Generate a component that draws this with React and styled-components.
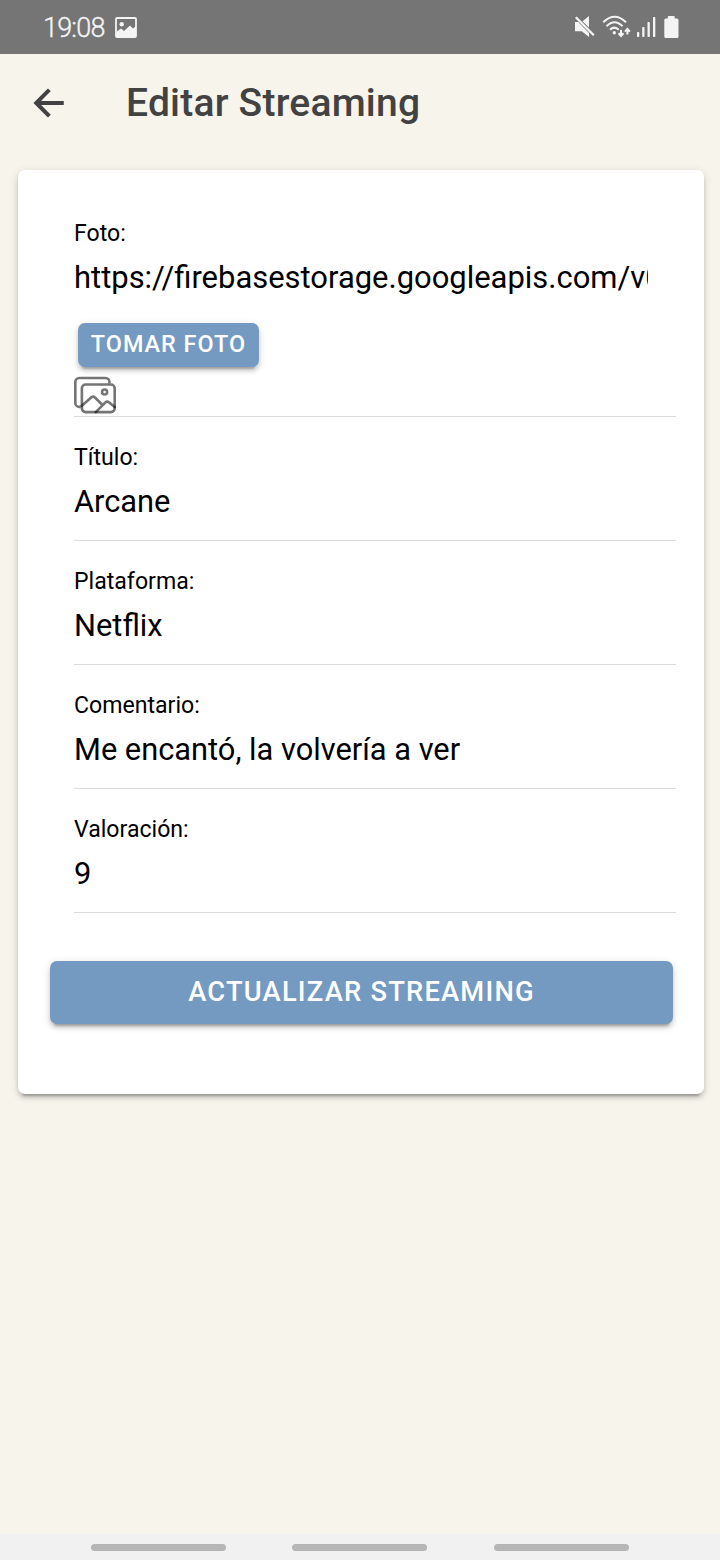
import React from "react";
import styled, { createGlobalStyle } from "styled-components";
import { IoImagesOutline } from "react-icons/io5";

const GlobalStyle = createGlobalStyle`
  * { box-sizing: border-box; }
  body { margin: 0; background: #f7f4ec; font-family: Roboto, sans-serif; }
`;

const Screen = styled.div`
  display: flex;
  flex-direction: column;
  width: 720px;
  height: 1560px;
  background: #f7f4ec;
  overflow: hidden;
`;

const StatusBar = styled.header`
  display: flex;
  align-items: center;
  justify-content: space-between;
  height: 54px;
  padding: 0 41px 0 43px;
  background: #757575;
  color: #f4f4f4;
`;

const StatusGroup = styled.div`
  display: flex;
  align-items: center;
  gap: ${(p) => p.$gap}px;
  svg { display: block; }
`;

const Clock = styled.span`
  width: 62px;
  font-size: 27px;
  line-height: 54px;
  font-weight: 300;
  letter-spacing: -0.8px;
  -webkit-text-stroke: 0.35px currentColor;
  padding-top: 1px;
`;

const Toolbar = styled.nav`
  display: flex;
  align-items: center;
  height: 98px;
  padding: 0 28px;
  color: #424242;
`;

const BackButton = styled.button`
  display: flex;
  width: 42px;
  height: 42px;
  margin: 0 56px 0 0;
  padding: 0;
  border: 0;
  background: none;
  color: inherit;
`;

const Title = styled.h1`
  margin: 0;
  font-size: 39px;
  line-height: 48px;
  font-weight: 500;
  letter-spacing: 0.22px;
  white-space: nowrap;
`;

const Card = styled.main`
  width: 686px;
  height: 924px;
  margin: 18px 16px 0 18px;
  padding: 30px 28px 0 32px;
  border-radius: 7px;
  background: #fff;
  box-shadow: 0 6px 2px -4px rgba(0, 0, 0, 0.2), 0 4px 4px 0 rgba(0, 0, 0, 0.14),
    0 2px 10px 0 rgba(0, 0, 0, 0.12);
`;

const Field = styled.section`
  display: flex;
  flex-direction: column;
  height: ${(p) => p.$height || 124}px;
  margin-left: 24px;
  padding-top: ${(p) => p.$top || 26}px;
  border-bottom: 1px solid #dcdcdc;
`;

const Label = styled.label`
  font-size: 23.1px;
  line-height: 30px;
  color: #000;
`;

const Value = styled.div`
  width: 574px;
  margin-top: 8px;
  overflow: hidden;
  font-size: ${(p) => p.$size || 30.8}px;
  line-height: 42px;
  color: #000;
  white-space: nowrap;
`;

const Button = styled.button`
  display: flex;
  justify-content: center;
  align-items: center;
  width: ${(p) => (p.$block ? 623 : 181)}px;
  height: ${(p) => (p.$block ? 63 : 44)}px;
  margin: ${(p) => (p.$block ? "48px 0 0" : "24px 0 0 4px")};
  padding: 0 0 ${(p) => (p.$block ? 1 : 2)}px;
  border: 0;
  border-radius: 7px;
  background: #749ac1;
  color: #fff;
  font-family: inherit;
  font-size: ${(p) => (p.$block ? 27.3 : 23.4)}px;
  font-weight: 500;
  letter-spacing: ${(p) => (p.$block ? 1.22 : 1)}px;
  text-transform: uppercase;
  white-space: nowrap;
  box-shadow: 0 6px 2px -4px rgba(0, 0, 0, 0.2), 0 4px 4px 0 rgba(0, 0, 0, 0.14),
    0 2px 10px 0 rgba(0, 0, 0, 0.12);
`;

const GalleryIcon = styled(IoImagesOutline)`
  display: block;
  width: 42px;
  height: 42px;
  margin-top: 7px;
  color: rgba(0, 0, 0, 0.54);
`;

const NavigationBar = styled.footer`
  display: flex;
  gap: 66.4px;
  height: 26px;
  margin-top: auto;
  padding: 10px 0 0 91px;
  background: #f1f1f1;
`;

const NavHandle = styled.span`
  width: 135px;
  height: 7px;
  border-radius: 4px;
  background: #b6b6b6;
`;

const PictureIcon = () => (
  <svg width="22" height="21" viewBox="0 0 22 21">
    <rect x="1" y="1" width="20" height="19" rx="1" fill="none" stroke="currentColor" strokeWidth="1.8" />
    <circle cx="6.7" cy="7.2" r="2.2" fill="currentColor" />
    <path d="M1 15 6 11.5 9 14 15 8.5 18 11.5 21 9V20H1Z" fill="currentColor" />
  </svg>
);

const MuteIcon = () => (
  <svg width="22" height="24" viewBox="0 0 22 24" fill="currentColor">
    <path d="M1 7H4.2L15 18V22L7.8 16.3H1ZM8.5 6.2 15 1V12.6Z" />
    <path d="M1.8 2.2 19.8 20.2" fill="none" stroke="currentColor" strokeWidth="2.3" />
  </svg>
);

const WifiIcon = () => (
  <svg width="29" height="24" viewBox="0 0 29 24" fill="none" stroke="currentColor" strokeWidth="2">
    <path d="M1.3 7.2Q12.5-3.8 24 7.2M4.5 11.2Q12.5 3.2 20.5 11.2M8 14.8Q12.5 10.5 16.8 14.8" />
    <circle cx="12.3" cy="17.8" r="1.7" fill="currentColor" stroke="none" />
    <path d="M19 15V20.5M16.5 18.3 19 21 21.5 18.3M25.4 19.5V14M22.9 16.6 25.4 13.9 27.9 16.6" strokeWidth="2" />
  </svg>
);

const SignalIcon = () => (
  <svg width="21" height="22" viewBox="0 0 21 22" fill="currentColor">
    <rect x="0" y="16" width="2.3" height="5" rx=".7" />
    <rect x="5.2" y="11" width="2.3" height="10" rx=".7" />
    <rect x="10.5" y="6" width="2.3" height="15" rx=".7" />
    <rect x="16" y="1" width="2.3" height="20" rx=".7" />
  </svg>
);

const BatteryIcon = () => (
  <svg width="15" height="23" viewBox="0 0 15 23" fill="currentColor">
    <path d="M4.5 0H10Q10.7 0 10.7.7V2.5H13Q14.5 2.5 14.5 4V20.5Q14.5 22 13 22H1.7Q.3 22 .3 20.5V4Q.3 2.5 1.7 2.5H3.8V.7Q3.8 0 4.5 0Z" />
  </svg>
);

const ArrowIcon = () => (
  <svg width="42" height="42" viewBox="0 0 512 512" fill="none" stroke="currentColor" strokeWidth="48" strokeLinecap="square" strokeMiterlimit="10">
    <path d="M244 400 100 256 244 112M120 256H412" />
  </svg>
);

const fields = [
  ["Título:", "Arcane"],
  ["Plataforma:", "Netflix"],
  ["Comentario:", "Me encantó, la volvería a ver"],
  ["Valoración:", "9"],
];

export default function App() {
  return (
    <>
      <GlobalStyle />
      <Screen>
        <StatusBar>
          <StatusGroup $gap={10}>
            <Clock>19:08</Clock>
            <PictureIcon />
          </StatusGroup>
          <StatusGroup $gap={6}>
            <MuteIcon />
            <WifiIcon />
            <SignalIcon />
            <BatteryIcon />
          </StatusGroup>
        </StatusBar>
        <Toolbar>
          <BackButton aria-label="Volver"><ArrowIcon /></BackButton>
          <Title>Editar Streaming</Title>
        </Toolbar>
        <Card>
          <Field $height={217} $top={19}>
            <Label>Foto:</Label>
            <Value $size={30.94}>https://firebasestorage.googleapis.com/v0</Value>
            <Button>Tomar foto</Button>
            <GalleryIcon />
          </Field>
          {fields.map(([label, value]) => (
            <Field key={label}>
              <Label>{label}</Label>
              <Value>{value}</Value>
            </Field>
          ))}
          <Button $block>Actualizar streaming</Button>
        </Card>
        <NavigationBar>
          <NavHandle />
          <NavHandle />
          <NavHandle />
        </NavigationBar>
      </Screen>
    </>
  );
}
